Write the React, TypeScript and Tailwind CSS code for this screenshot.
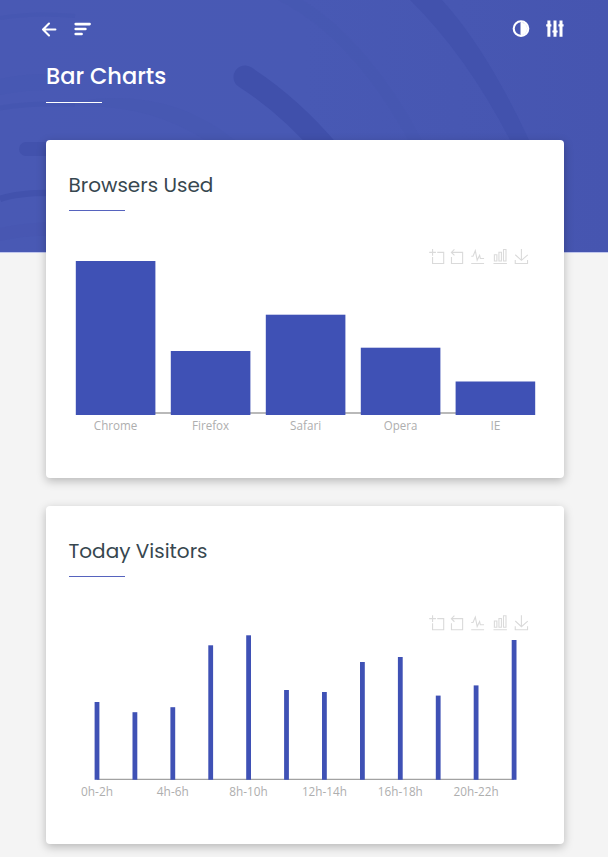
import type { ReactNode } from 'react';

const browsers = [
  { name: 'Chrome', x: 76, top: 261, width: 43.5 },
  { name: 'Firefox', x: 171, top: 351, width: 37 },
  { name: 'Safari', x: 266, top: 314.7, width: 31 },
  { name: 'Opera', x: 361, top: 347.7, width: 33.5 },
  { name: 'IE', x: 455.8, top: 381.5, width: 10 },
];

const visitors = [
  { x: 97, top: 702, label: '0h-2h', width: 32 },
  { x: 134.9, top: 712.2 },
  { x: 172.8, top: 707.2, label: '4h-6h', width: 32 },
  { x: 210.7, top: 645.3 },
  { x: 248.6, top: 635.3, label: '8h-10h', width: 38.5 },
  { x: 286.5, top: 690 },
  { x: 324.4, top: 692, label: '12h-14h', width: 45 },
  { x: 362.4, top: 662 },
  { x: 400.3, top: 657, label: '16h-18h', width: 45 },
  { x: 438.2, top: 695.6 },
  { x: 476.1, top: 685.4, label: '20h-22h', width: 45 },
  { x: 514.1, top: 640 },
];

function Toolbox({ y }: { y: number }) {
  const icons = [
    { x: 429.2, d: 'M0,13.5h26.9 M13.5,26.9V0 M32.1,13.5H58V58H13.5 V32.1' },
    { x: 448.9, d: 'M22,1.4L9.9,13.5l12.3,12.3 M10.3,13.5H54.9v44.6 H10.3v-26' },
    { x: 470.2, d: 'M4.1,28.9h7.1l9.3-22l7.4,38l9.7-19.7l3,12.8h14.9M4.1,58h51.4' },
    { x: 492.7, d: 'M6.7,22.9h10V48h-10V22.9zM24.9,13h10v35h-10V13zM43.2,2h10v46h-10V2zM3.1,58h53.7' },
    { x: 514.1, d: 'M4.7,22.9L29.3,45.5L54.7,23.4M4.6,43.6L4.6,58L53.8,58L53.8,43.6M29.2,45.1L29.2,0' },
  ];
  return (
    <g fill="none" stroke="#dadada" strokeWidth="4.4">
      {icons.map((i) => (
        <path key={i.x} d={i.d} transform={`translate(${i.x} ${y}) scale(.25)`} />
      ))}
    </g>
  );
}

function Label({ x, y, width, children }: { x: number; y: number; width: number; children: ReactNode }) {
  return (
    <text
      x={x - width / 2}
      y={y}
      textLength={width}
      lengthAdjust="spacingAndGlyphs"
      className="fill-[#aeaeae] font-['Segoe_UI','Open_Sans',sans-serif] text-[12px]"
    >
      {children}
    </text>
  );
}

function Card({ title, children }: { title: string; children: ReactNode }) {
  return (
    <section className="h-[338px] w-full overflow-hidden rounded-[4px] bg-white shadow-[0_3px_10px_rgba(0,0,0,0.25)]">
      <div className="flex h-[90px] flex-col px-[22.5px] pt-[30px]">
        <h2 className="h-[40px] whitespace-nowrap font-['Poppins',Inter,sans-serif] text-[20px] leading-[30px] text-[#37474f]">
          {title}
        </h2>
        <div className="h-px w-[56.5px] bg-[#5663be]" />
      </div>
      {children}
    </section>
  );
}

function Backdrop() {
  return (
    <svg className="absolute inset-0 -z-10" width="608" height="253" viewBox="0 0 608 253" fill="none" aria-hidden="true">
      <defs>
        <linearGradient id="base" x1="0" y1="0" x2="1" y2="0">
          <stop stopColor="#4959b4" />
          <stop offset=".5" stopColor="#4859b4" />
          <stop offset="1" stopColor="#4655b0" />
        </linearGradient>
      </defs>
      <rect width="608" height="252" fill="url(#base)" />
      <rect y="252" width="608" height="1" fill="#c0c6ed" />
      <path d="M410 0Q466 55 510 140H529Q486 48 442 0Z" fill="#4252ad" />
      <path d="M245 77Q290 106 329 152" stroke="#4050ab" strokeWidth="23" strokeLinecap="round" />
      <path d="M278 0Q352 38 408 140H422Q370 42 303 0Z" fill="#4555b0" opacity=".35" />
      <path d="M0 18Q35 12 75 16" stroke="#4353ae" strokeWidth="4" opacity=".35" />
      <path d="M0 79Q40 70 80 77L46 90Q25 90 0 95Z" fill="#4353ae" opacity=".2" />
      <path d="M0 108Q30 103 75 104" stroke="#4252ad" strokeWidth="5" opacity=".4" />
      <path d="M75 102Q165 85 235 140H205Q150 104 75 106Z" fill="#4353ae" opacity=".18" />
      <path d="M26 149H70" stroke="#4252ad" strokeWidth="14" strokeLinecap="round" />
      <path d="M0 199Q20 192 60 193" stroke="#4252ad" strokeWidth="6.5" />
      <path d="M0 228Q25 222 60 222V236Q25 235 0 241Z" fill="#4454af" opacity=".3" />
    </svg>
  );
}

export default function App() {
  return (
    <div className="relative isolate h-[857px] w-[608px] overflow-hidden bg-[#f4f4f4]">
      <Backdrop />
      <header className="h-[140px]">
        <nav className="flex h-[58px] items-center justify-between pl-[40px] pr-[43px]">
          <div className="flex gap-[16px]">
            <button aria-label="Back">
              <svg width="18" height="20" viewBox="40 19 18 20" fill="none" stroke="#fff" strokeWidth="2.1" strokeLinecap="round" strokeLinejoin="round">
                <path d="M55.4 29.5H43M49 23.5L43 29.5L49 35.5" />
              </svg>
            </button>
            <button aria-label="Menu">
              <svg width="20" height="20" viewBox="74 19 20 20" fill="none" stroke="#fff" strokeWidth="2.6" strokeLinecap="round">
                <path d="M75.7 24.1H89.6M75.7 29H85.4M75.7 34H81.6" />
              </svg>
            </button>
          </div>
          <div className="flex gap-[14px]">
            <button aria-label="Contrast">
              <svg width="20" height="20" viewBox="511 19 20 20">
                <circle cx="521" cy="28.6" r="7.3" fill="none" stroke="#fff" strokeWidth="2.1" />
                <path d="M521 22.5a6.1 6.1 0 0 1 0 12.2Z" fill="#fff" stroke="#fff" />
              </svg>
            </button>
            <button aria-label="Settings">
              <svg width="20" height="20" viewBox="545 19 20 20" fill="none" stroke="#fff" strokeWidth="3">
                <path d="M548.9 20.5V36.7M555 20.5V36.7M561 20.5V36.7" />
                <path d="M546.2 25.4H551.4M552.4 31.5H557.6M558.4 25.4H563.6" strokeWidth="2.2" />
              </svg>
            </button>
          </div>
        </nav>
        <div className="flex flex-col pl-[46px]">
          <h1 className="h-[44px] whitespace-nowrap pt-[2px] font-['Poppins',Inter,sans-serif] text-[22.5px] font-medium leading-[32px] text-white">
            Bar Charts
          </h1>
          <div className="h-px w-[56px] bg-white" />
        </div>
      </header>
      <main className="flex flex-col gap-[28px] pl-[46px] pr-[44px]">
        <Card title="Browsers Used">
          <svg width="518" height="248" viewBox="46 230 518 248" role="img">
            <Toolbox y={249} />
            <path d="M76 413H535" stroke="#a2a2a2" strokeWidth="1.5" />
            {browsers.map((b) => (
              <g key={b.name}>
                <rect x={b.x - 0.2} y={b.top} width="79.6" height={415 - b.top} fill="#3f51b5" />
                <Label x={b.x + 39.6} y={429.7} width={b.width}>{b.name}</Label>
              </g>
            ))}
          </svg>
        </Card>
        <Card title="Today Visitors">
          <svg width="518" height="248" viewBox="46 596 518 248" role="img">
            <Toolbox y={615.3} />
            <path d="M97 779.4H514" stroke="#a2a2a2" strokeWidth="1.3" />
            {visitors.map((v) => (
              <g key={v.x}>
                <rect x={v.x - 2.4} y={v.top} width="4.8" height={779.8 - v.top} fill="#3f51b5" />
                {v.label && <Label x={v.x} y={796} width={v.width}>{v.label}</Label>}
              </g>
            ))}
          </svg>
        </Card>
      </main>
    </div>
  );
}
